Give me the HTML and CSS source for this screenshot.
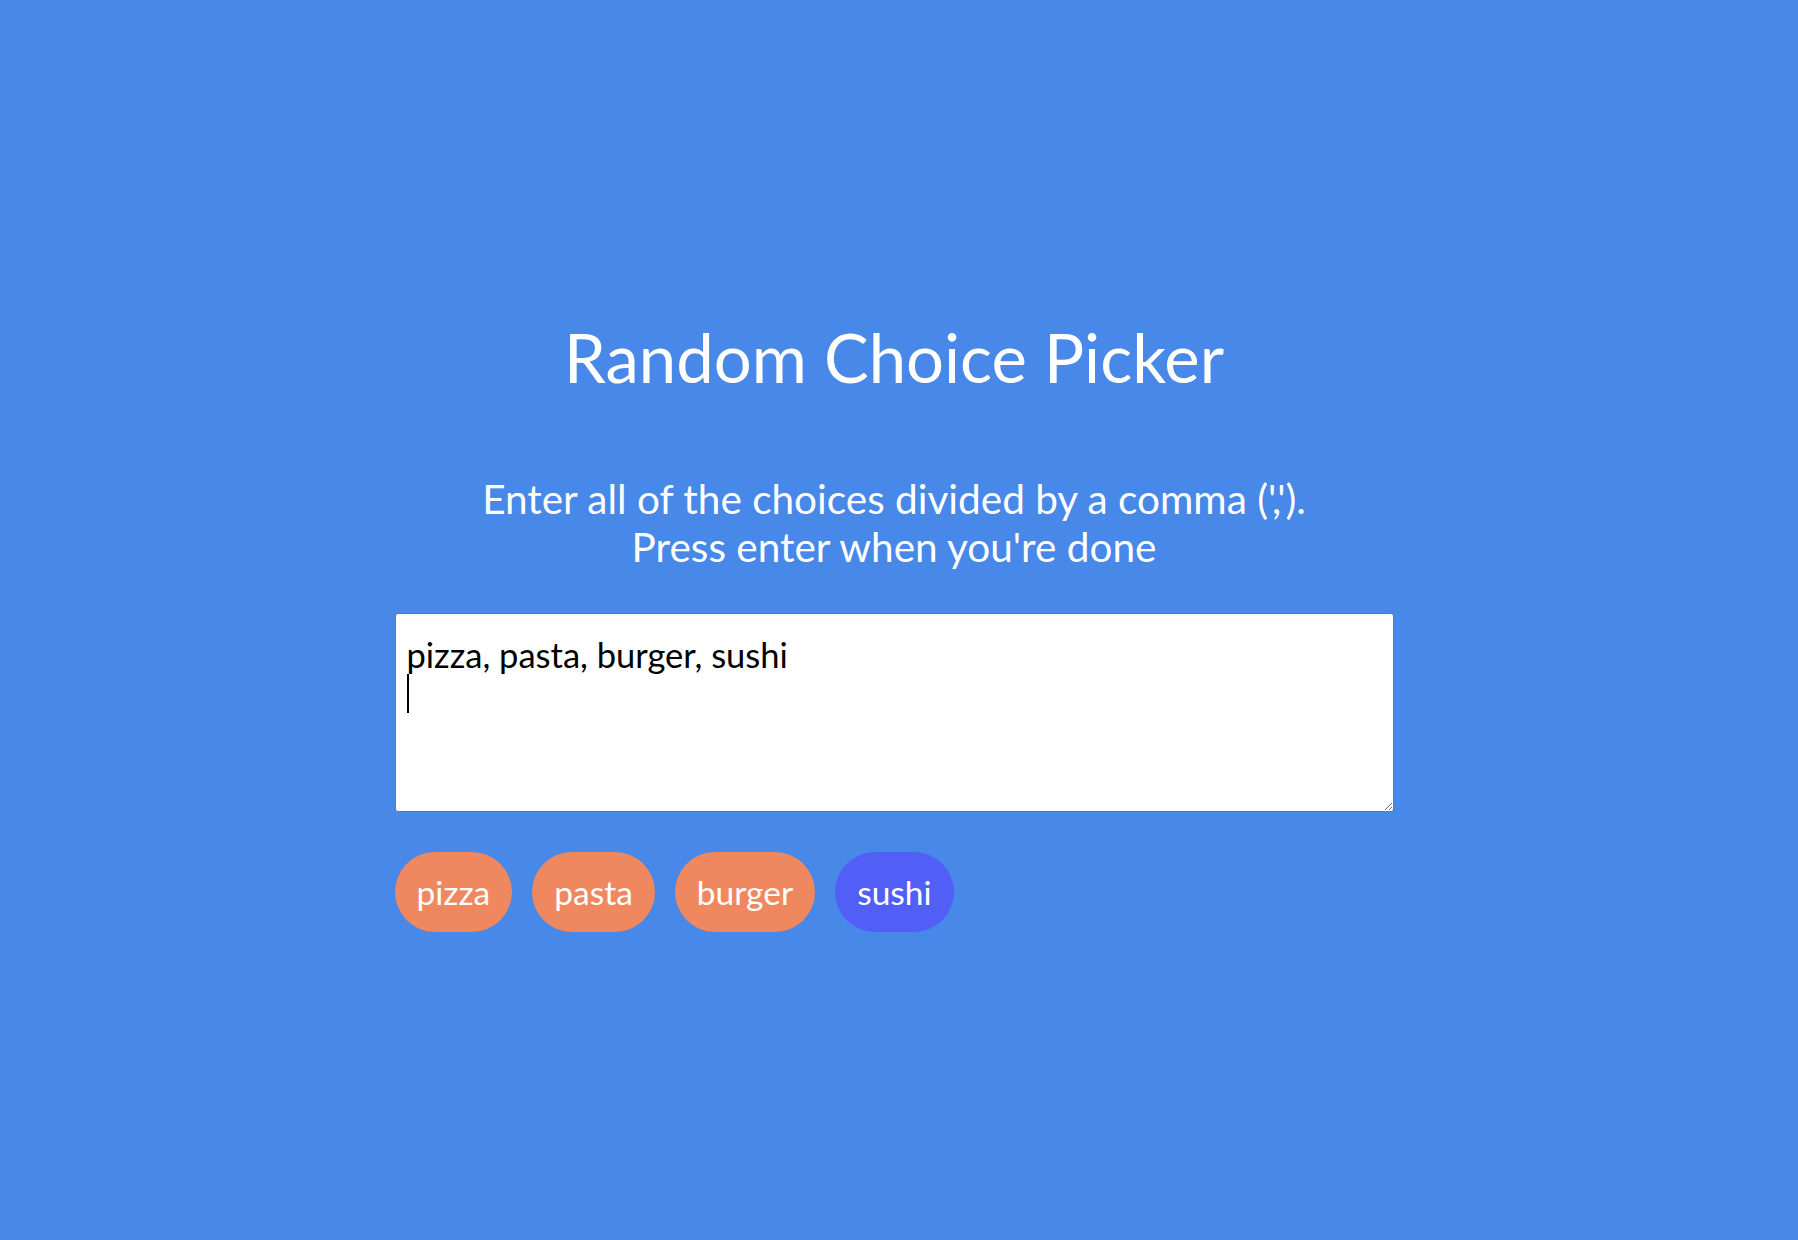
FILE: index.html
```html
<!DOCTYPE html>
<html lang="en">
<head>
<meta charset="UTF-8">
<title>Random Choice Picker</title>
<link rel="stylesheet" href="styles.css">
</head>
<body>
  <main class="page">
    <h1 class="title">Random Choice Picker</h1>
    <div class="container">
      <p class="subtitle">Enter all of the choices divided by a comma (',').<br>Press enter when you're done</p>
      <div class="field">
        <textarea class="choices" spellcheck="false">pizza, pasta, burger, sushi
</textarea>
        <span class="caret"></span>
      </div>
      <div class="tags">
        <span class="tag">pizza</span>
        <span class="tag">pasta</span>
        <span class="tag">burger</span>
        <span class="tag highlight">sushi</span>
      </div>
    </div>
  </main>
</body>
</html>
```

FILE: styles.css
```css
* { box-sizing: border-box; }

html, body {
  margin: 0;
  height: 100%;
}

body {
  background-color: #4788e8;
  font-family: Lato, "Open Sans", sans-serif;
  overflow: hidden;
}

.page {
  height: 100%;
  padding: 9px 10px 0 0;
  display: flex;
  flex-direction: column;
  align-items: center;
  justify-content: center;
}

.title {
  color: #fff;
  font-size: 67px;
  font-weight: 400;
  line-height: 80px;
  margin: 0 0 78px;
  text-align: center;
}

.container {
  width: 999px;
}

.subtitle {
  color: #fff;
  font-size: 40.5px;
  line-height: 48px;
  text-align: center;
  margin: 0 0 42px;
}

.field {
  position: relative;
}

.choices {
  display: block;
  width: 100%;
  height: 199px;
  border: 1px solid #767676;
  border-radius: 3px;
  background: #fff;
  color: #000;
  font-family: inherit;
  font-size: 34.5px;
  line-height: 40px;
  padding: 21px 11px;
  margin: 0 0 40px;
  caret-color: transparent;
  outline: none;
  resize: vertical;
}

.caret {
  position: absolute;
  left: 12px;
  top: 61px;
  width: 2px;
  height: 39px;
  background: #000;
}

.tags {
  display: flex;
  gap: 20px;
}

.tag {
  background-color: #ef885e;
  color: #fff;
  border-radius: 40px;
  padding: 20px 22px;
  font-size: 33.5px;
  line-height: 40px;
}

.tag.highlight {
  background-color: #525ff7;
}
```
